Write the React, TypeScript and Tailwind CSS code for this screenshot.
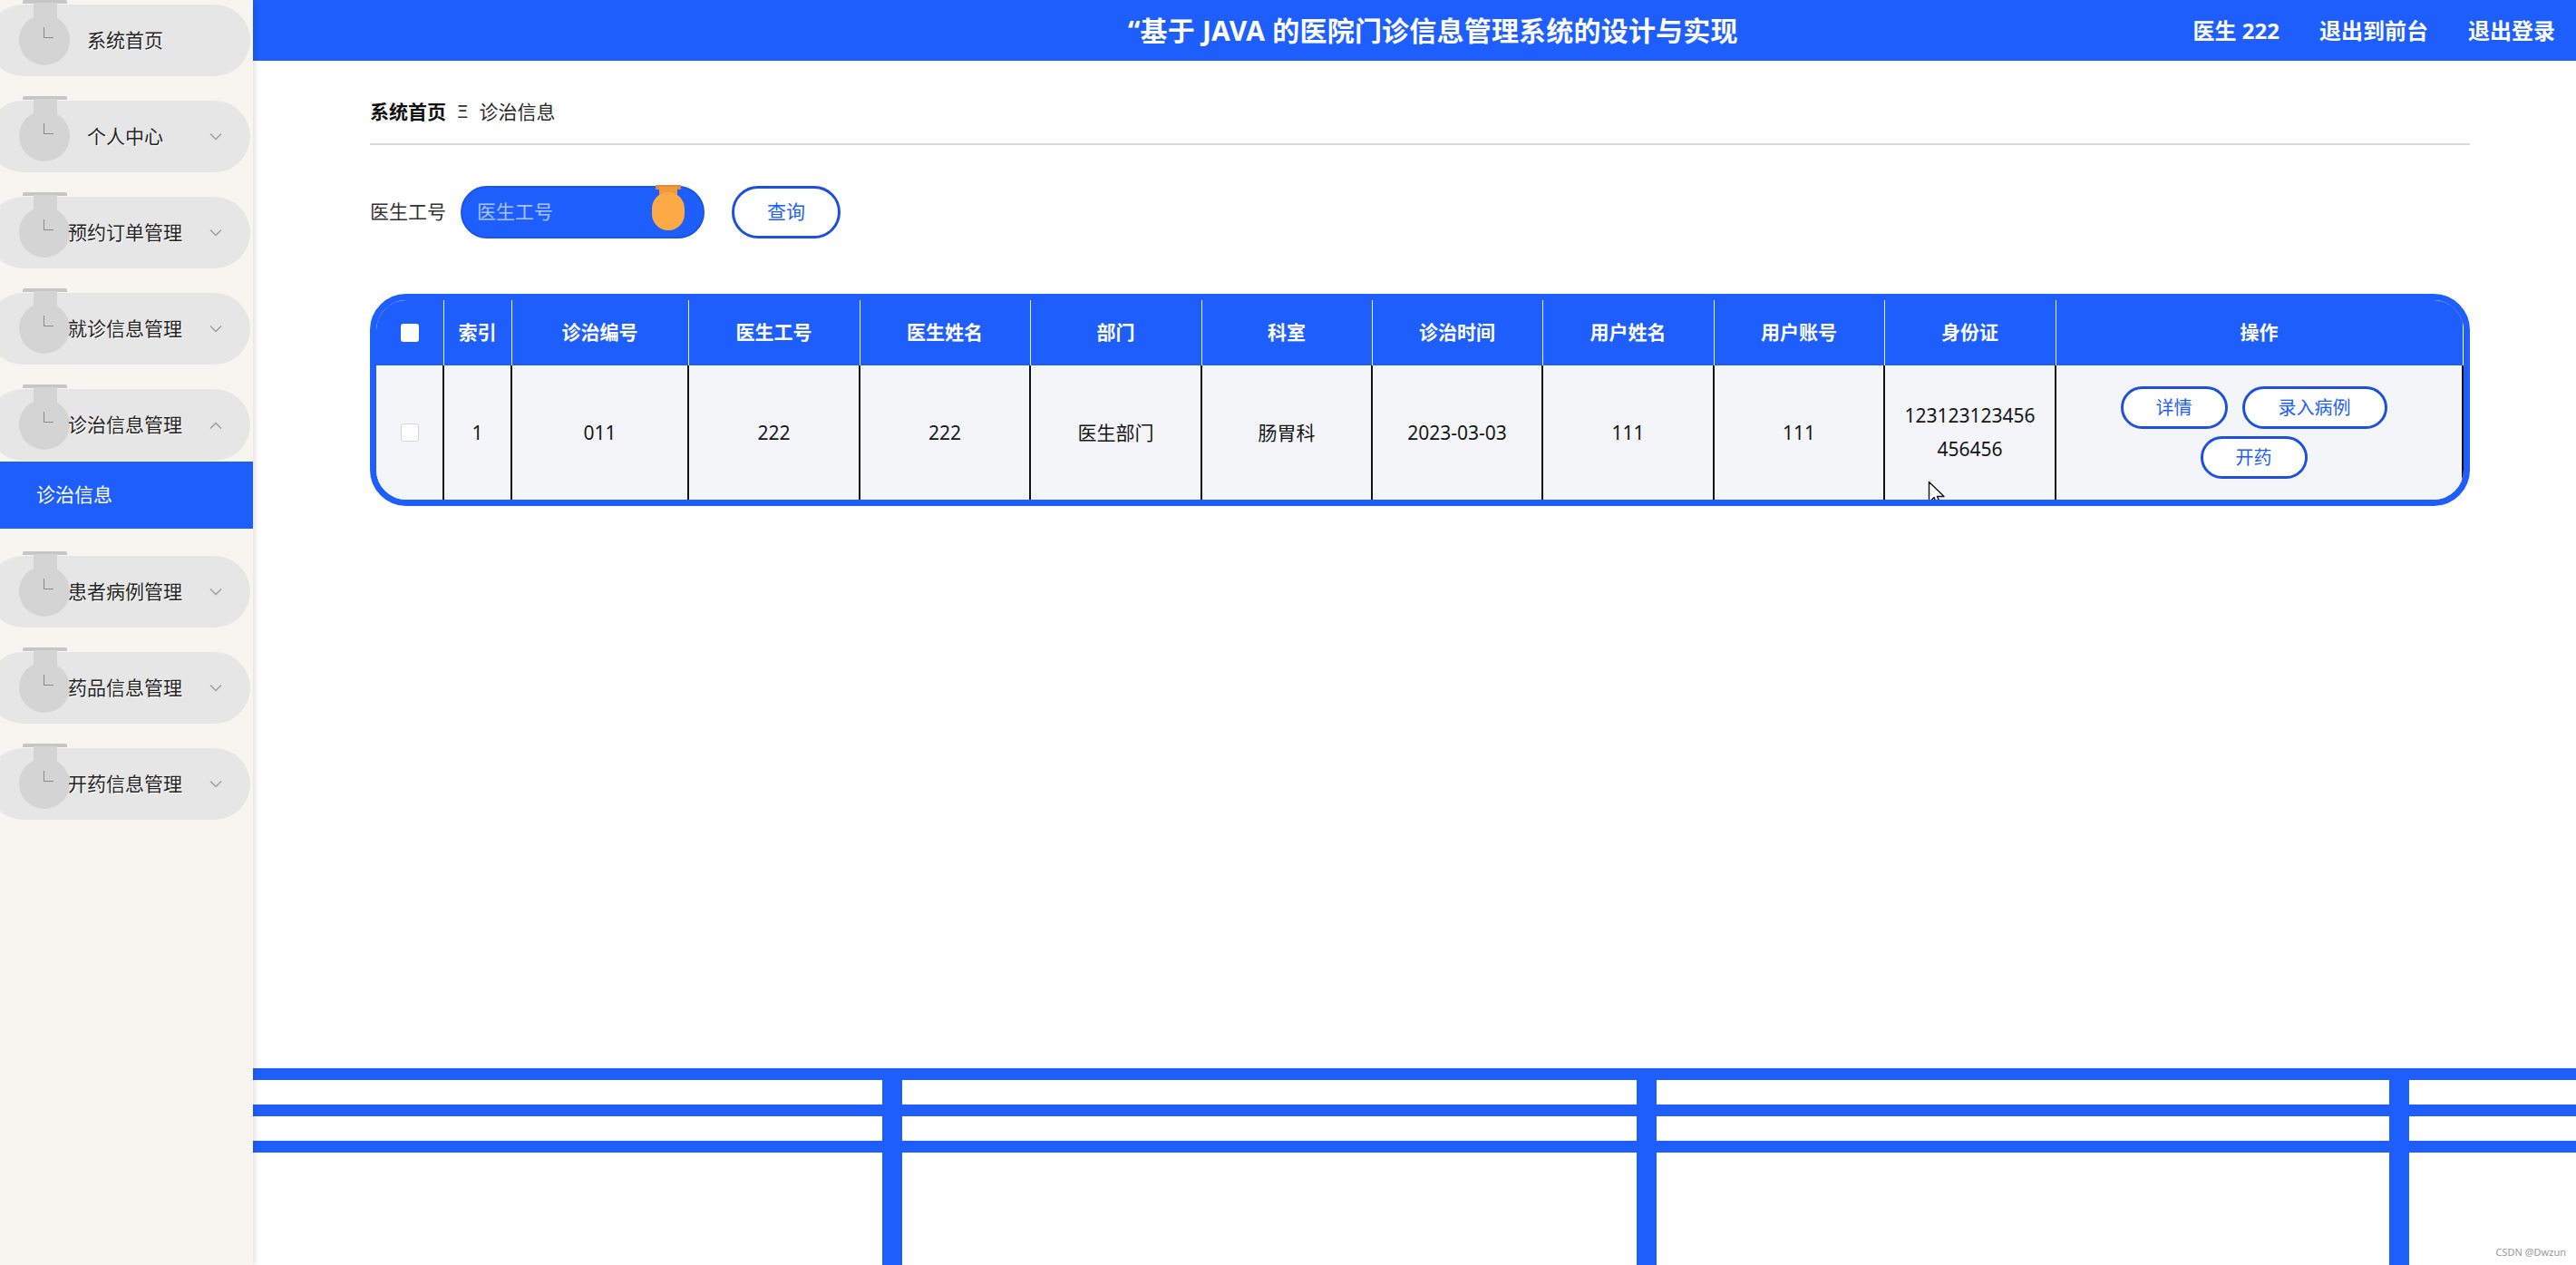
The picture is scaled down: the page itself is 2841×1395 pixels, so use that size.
import { ReactNode } from "react";

const MENU = [
  { label: "系统首页", arrow: null },
  { label: "个人中心", arrow: "down" },
  { label: "预约订单管理", arrow: "down" },
  { label: "就诊信息管理", arrow: "down" },
  { label: "诊治信息管理", arrow: "up", open: true },
  { label: "患者病例管理", arrow: "down" },
  { label: "药品信息管理", arrow: "down" },
  { label: "开药信息管理", arrow: "down" },
];

const COLUMNS = [
  "索引",
  "诊治编号",
  "医生工号",
  "医生姓名",
  "部门",
  "科室",
  "诊治时间",
  "用户姓名",
  "用户账号",
  "身份证",
  "操作",
];

function Chevron({ up }: { up?: boolean }) {
  return (
    <svg width="14" height="9" viewBox="0 0 14 9" className="absolute right-[31px] top-1/2 -translate-y-1/2">
      <polyline
        points={up ? "1,8 7,2 13,8" : "1,1 7,7 13,1"}
        fill="none"
        stroke="#9a9a9a"
        strokeWidth="1.3"
      />
    </svg>
  );
}

function MenuPill({ label, arrow }: { label: string; arrow: string | null }) {
  return (
    <div className="relative ml-[-14px] flex h-[79px] w-[290px] items-center justify-center rounded-full bg-[#e6e6e6] pl-[14px]">
      {/* hanging ornament */}
      <div className="absolute left-[39px] top-[-5px] h-[4px] w-[49px] rounded-t-[2px] bg-[#c6c6c6]" />
      <div className="absolute left-[51px] top-[-2px] h-[24px] w-[26px] bg-[#d4d4d4]" />
      <div className="absolute left-[35px] top-[11px] h-[56px] w-[56px] rounded-full bg-[#d4d4d4]" />
      <div className="absolute left-[62px] top-[25px] h-[12px] w-[11px] border-b border-l border-[#8a8a8a]" />
      <span className="relative text-[21px] text-[#252525] [text-shadow:1px_1px_0_#ffffff]">{label}</span>
      {arrow && <Chevron up={arrow === "up"} />}
    </div>
  );
}

function Sidebar() {
  return (
    <aside className="relative z-10 h-full w-[279px] shrink-0 overflow-hidden bg-[#f6f5f0] shadow-[2px_0_6px_rgba(0,0,0,0.13)]">
      <div className="mt-[5px] flex flex-col gap-[27px]">
        {MENU.map((m) =>
          m.open ? (
            <div key={m.label} className="flex flex-col">
              <MenuPill label={m.label} arrow={m.arrow} />
              <div className="mb-[3px] mt-[1px] flex h-[74px] items-center bg-[#1e5efd] pl-[40px] text-[21px] text-white">
                诊治信息
              </div>
            </div>
          ) : (
            <MenuPill key={m.label} label={m.label} arrow={m.arrow} />
          )
        )}
      </div>
    </aside>
  );
}

function Header() {
  return (
    <header className="flex h-[67px] shrink-0 items-center bg-[#1e5efd] text-white">
      <h1 className="ml-[965px] text-[30px] font-bold tracking-[0.2px]">“基于 JAVA 的医院门诊信息管理系统的设计与实现</h1>
      <div className="ml-auto flex gap-[44px] pr-[23px] text-[24px] font-bold">
        <span>医生 222</span>
        <span>退出到前台</span>
        <span>退出登录</span>
      </div>
    </header>
  );
}

function OpButton({ w, children }: { w: string; children: ReactNode }) {
  return (
    <button className={`flex h-[47px] items-center justify-center rounded-full border-[3px] border-[#1d50dc] bg-white text-[20px] text-[#1e5efd] ${w}`}>
      {children}
    </button>
  );
}

function Cursor() {
  return (
    <svg width="22" height="30" viewBox="0 0 22 30" className="absolute left-[47px] top-[126px]">
      <path d="M1.5 1.5 L1.5 24 L7 18.5 L11 27.5 L14.5 26 L10.5 17.5 L18 17.5 Z" fill="#fff" stroke="#111" strokeWidth="1.4" strokeLinejoin="round" />
    </svg>
  );
}

function DataTable() {
  const row = ["1", "011", "222", "222", "医生部门", "肠胃科", "2023-03-03", "111", "111"];
  return (
    <div className="mt-[61px] overflow-hidden rounded-[40px] border-[7px] border-[#1e5efd]">
      <table className="w-full table-fixed border-collapse">
        <colgroup>
          <col className="w-[74px]" />
          <col className="w-[75px]" />
          <col className="w-[195px]" />
          <col className="w-[189px]" />
          <col className="w-[188px]" />
          <col className="w-[189px]" />
          <col className="w-[188px]" />
          <col className="w-[188px]" />
          <col className="w-[189px]" />
          <col className="w-[188px]" />
          <col className="w-[189px]" />
          <col />
        </colgroup>
        <thead>
          <tr className="h-[72px] bg-[#1e5efd] text-[21px] font-bold text-white">
            <th className="align-middle">
              <div className="mx-auto h-[20px] w-[20px] rounded-[3px] bg-white" />
            </th>
            {COLUMNS.map((c, i) => (
              <th
                key={c}
                className={`border-l border-white/90 text-center align-middle ${i === COLUMNS.length - 1 ? "border-r" : ""}`}
              >
                {c}
              </th>
            ))}
          </tr>
        </thead>
        <tbody>
          <tr className="h-[148px] bg-[#f4f5f9] text-[21px] text-[#161616]">
            <td className="border-t border-white align-middle">
              <div className="mx-auto h-[20px] w-[20px] rounded-[3px] border border-[#d2d5dc] bg-white" />
            </td>
            {row.map((v, i) => (
              <td key={i} className="border-l-2 border-t border-l-[#111] border-t-white text-center align-middle">
                {v}
              </td>
            ))}
            <td className="relative border-l-2 border-t border-l-[#111] border-t-white text-center align-middle leading-[37px]">
              <div>123123123456</div>
              <div>456456</div>
              <Cursor />
            </td>
            <td className="border-l-2 border-r-2 border-t border-l-[#111] border-r-[#111] border-t-white align-middle">
              <div className="flex flex-col items-center gap-[8px] pr-[12px]">
                <div className="flex gap-[16px]">
                  <OpButton w="w-[118px]">详情</OpButton>
                  <OpButton w="w-[160px]">录入病例</OpButton>
                </div>
                <OpButton w="w-[118px]">开药</OpButton>
              </div>
            </td>
          </tr>
        </tbody>
      </table>
    </div>
  );
}

function Railing() {
  return (
    <div className="relative mt-auto h-[217px] shrink-0">
      <div className="flex flex-col gap-[27px]">
        <div className="h-[13px] bg-[#1e5efd]" />
        <div className="h-[13px] bg-[#1e5efd]" />
        <div className="h-[13px] bg-[#1e5efd]" />
      </div>
      <div className="absolute bottom-0 left-[694px] top-0 w-[22px] bg-[#1e5efd]" />
      <div className="absolute bottom-0 left-[1526px] top-0 w-[22px] bg-[#1e5efd]" />
      <div className="absolute bottom-0 left-[2356px] top-0 w-[22px] bg-[#1e5efd]" />
      <span className="absolute bottom-[6px] right-[11px] text-[11px] text-[#9a9a9a]">CSDN @Dwzun</span>
    </div>
  );
}

export default function App() {
  return (
    <div className="flex h-[1395px] w-full overflow-hidden bg-white font-['Noto_Sans','Noto_Sans_CJK_SC',sans-serif]">
      <Sidebar />
      <main className="flex min-w-0 flex-1 flex-col">
        <Header />
        <section className="pl-[129px] pr-[117px]">
          <div className="mt-[41px] flex items-center border-b-2 border-[#dadada] pb-[20px] text-[21px] leading-[30px]">
            <span className="font-bold text-[#111]">系统首页</span>
            <span className="mx-[12px] text-[20px] text-[#333]">Ξ</span>
            <span className="text-[#2a2a2a]">诊治信息</span>
          </div>
          <div className="mt-[45px] flex items-center">
            <span className="mr-[16px] text-[21px] text-[#333]">医生工号</span>
            <div className="relative flex h-[58px] w-[269px] items-center rounded-full border-2 border-[#1b55e6] bg-[#1e5efd] pl-[16px] text-[21px] text-[#a9c2ff]">
              医生工号
              <div className="absolute left-[213px] top-[-3px] h-[5px] w-[28px] bg-[#e08d35]" />
              <div className="absolute left-[217px] top-[-1px] h-[14px] w-[20px] bg-[#ef9a3c]" />
              <div className="absolute left-[209px] top-[5px] h-[42px] w-[36px] rounded-full bg-[#fca946]" />
            </div>
            <button className="ml-[30px] flex h-[58px] w-[120px] items-center justify-center rounded-full border-[3px] border-[#1d50dc] bg-white text-[21px] text-[#1e5efd]">
              查询
            </button>
          </div>
          <DataTable />
        </section>
        <Railing />
      </main>
    </div>
  );
}
